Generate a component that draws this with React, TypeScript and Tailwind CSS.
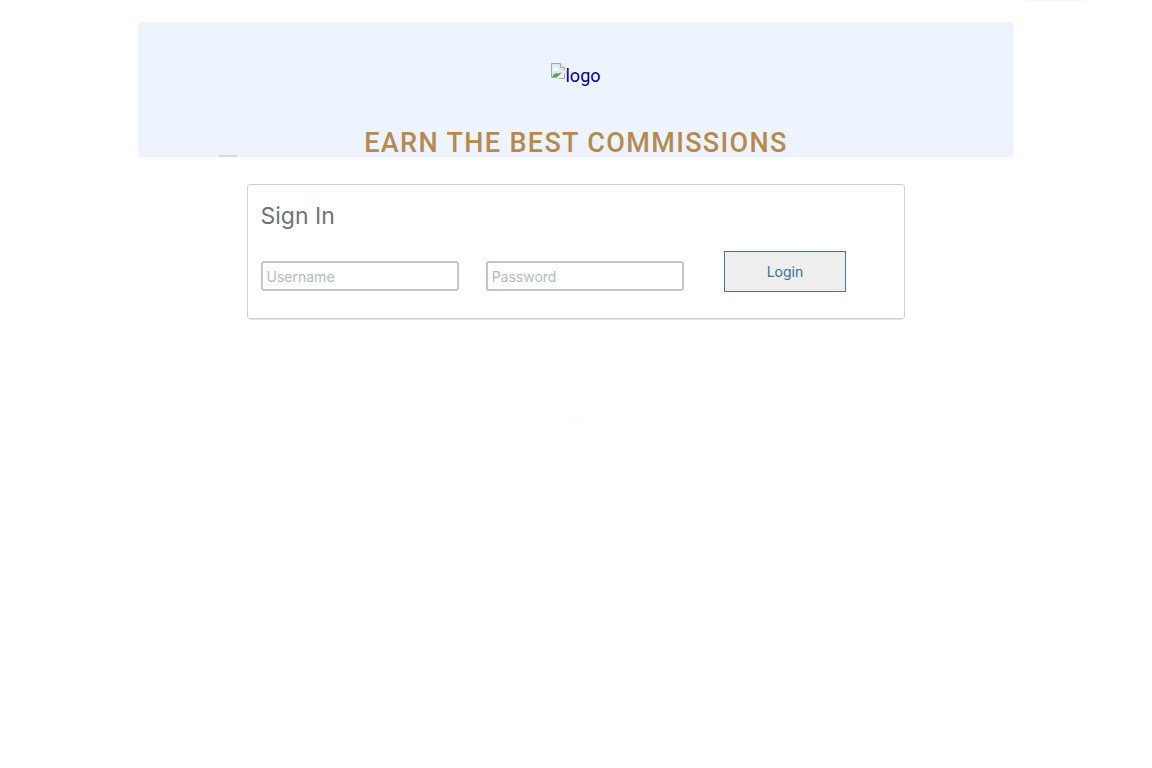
function BrokenImageIcon() {
  return (
    <svg width="14" height="16" viewBox="0 0 14 16" aria-hidden="true" className="shrink-0">
      <path d="M.5 14.5V.5h9l4 4v3" fill="#e3ecfb" stroke="#a5a9ac" />
      <path d="M1 1h8v4h4v3L6 15H1Z" fill="#dfe9fb" />
      <path d="M9.5.5v4h4" fill="#fff" stroke="#a5a9ac" />
      <path d="M2 6.500a2 2 0 0 1 4-1 2 2 0 0 1 2 2H2Z" fill="#fff" />
      <path d="M1 14.500c1-4 4-5 6-4l4-1-5 5Z" fill="#62a354" />
      <path d="M.5 14.500h5M8 15.500h5.500V10" fill="none" stroke="#a5a9ac" />
    </svg>
  );
}

const fieldClass =
  "block h-[30px] w-full rounded-[3px] border-2 border-[#c3c5c7] bg-white px-1 text-[14px] text-[#66696c] placeholder:text-[#b3bac1] outline-none focus:border-[#7d9bb0]";

export default function App() {
  return (
    <div className="relative min-h-screen bg-white font-['Roboto','Liberation_Sans',sans-serif]">
      <div className="absolute right-[67px] top-0 h-px w-[60px] rounded-full bg-[#f6f6f6]" />
      <div className="pt-[22px]">
        <header className="relative mx-auto w-[75.8%] bg-[#edf4fe] pt-[41px]">
          <div className="flex flex-col items-center">
            <a href="#home" className="flex h-6 items-start text-[18px] leading-[26px] text-[#00007f]">
              <BrokenImageIcon />
              <span>logo</span>
            </a>
            <h1 className="mt-[42px] whitespace-nowrap text-[27px] font-medium uppercase leading-7 tracking-wider text-[#b48a52]">
              Earn the best commissions
            </h1>
          </div>
          <div className="absolute bottom-0 left-[79px] h-0.5 w-5 rounded-t-full bg-[#d6dbe4]" />
        </header>
      </div>
      <main className="mx-auto mt-[27px] w-[57.2%] rounded-[3px] border border-[#d2d2d2] px-[13px] pb-[26px] pt-4 shadow-[0_1px_1px_#e4e4e4] font-['Inter','Liberation_Sans',sans-serif]">
        <h2 className="text-[23px] leading-[30px] text-[#707274]">Sign In</h2>
        <form className="mt-5 flex items-center" onSubmit={(e) => e.preventDefault()}>
          <div className="mr-[27px] w-[31.4%] pt-[9px]">
            <input aria-label="Username" name="username" type="text" placeholder="Username" className={fieldClass} />
          </div>
          <div className="mr-10 w-[31.4%] pt-[9px]">
            <input aria-label="Password" name="password" type="password" placeholder="Password" className={fieldClass} />
          </div>
          <button type="submit" className="h-[41px] w-[19.4%] border border-[#3f7694] bg-[#eeeeee] text-[14px] text-[#33708f]">
            Login
          </button>
        </form>
      </main>
      <div className="mx-auto mt-[104px] h-px w-[3px] bg-[#f6f6f6]" />
    </div>
  );
}
